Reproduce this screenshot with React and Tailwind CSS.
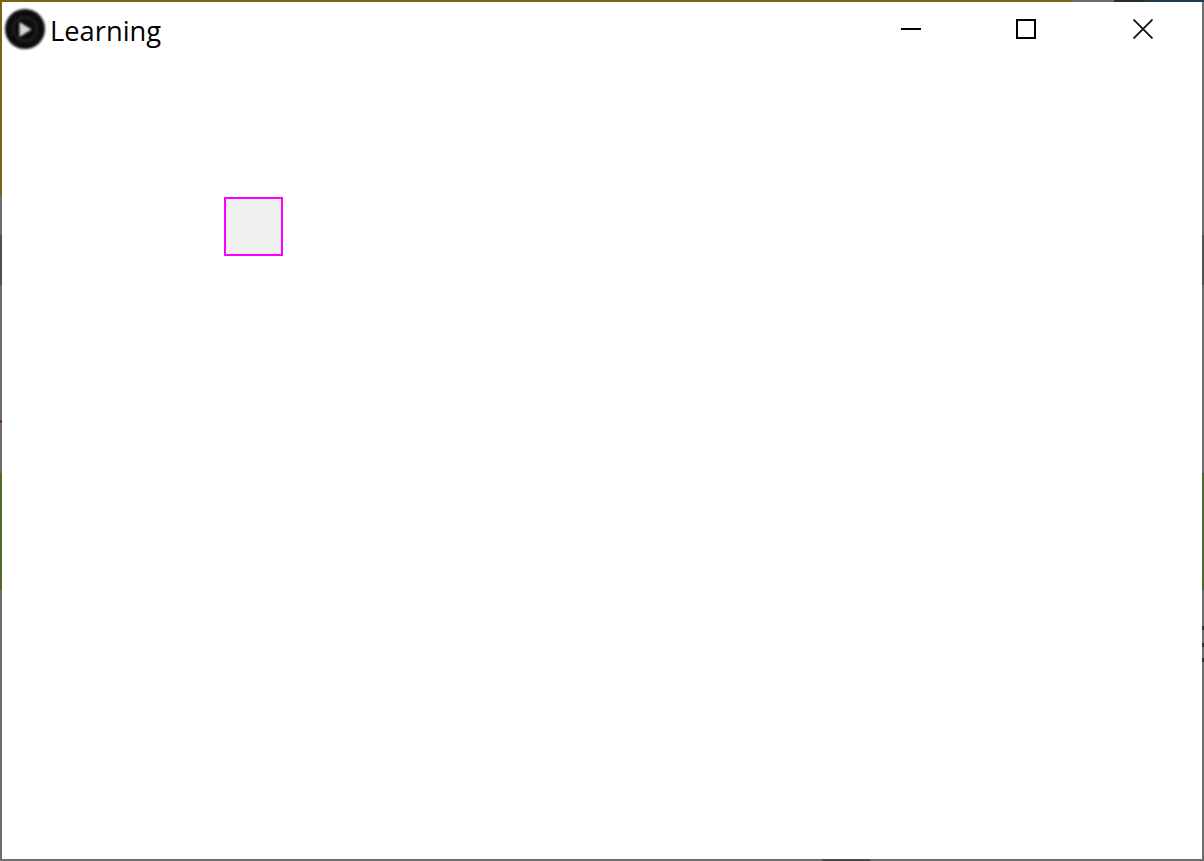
function WindowIcon() {
  return (
    <svg width="44" height="44" viewBox="0 0 44 44" className="shrink-0">
      <defs>
        <filter id="soft" x="-10%" y="-10%" width="120%" height="120%">
          <feGaussianBlur stdDeviation="0.9" />
        </filter>
        <filter id="softer" x="-30%" y="-30%" width="160%" height="160%">
          <feGaussianBlur stdDeviation="0.8" />
        </filter>
      </defs>
      <circle cx="22" cy="22" r="20" fill="#0b0b0b" filter="url(#soft)" />
      <circle cx="22" cy="22" r="12" fill="none" stroke="#1e1e1e" strokeWidth="3" filter="url(#soft)" />
      <path d="M16.5 15 L28.5 22.5 L16.5 30 Z" fill="#d6d6d6" filter="url(#softer)" />
    </svg>
  )
}

export default function App() {
  return (
    <div className="flex h-[861px] w-[1204px] flex-col overflow-hidden bg-white font-['Open_Sans','Noto_Sans',sans-serif]">
      <div className="flex h-[2px] shrink-0">
        <div className="w-[1071px] bg-[#7a6414]" />
        <div className="w-[43px] bg-[#6e6e6e]" />
        <div className="w-[30px] bg-[#2b2d30]" />
        <div className="flex-1 bg-[#1d3a48]" />
      </div>

      <div className="flex min-h-0 flex-1">
        <div className="flex w-[2px] shrink-0 flex-col">
          <div className="h-[193px] bg-[#7a6414]" />
          <div className="h-[40px] bg-[#6e6e6e]" />
          <div className="h-[50px] bg-[#505050]" />
          <div className="h-[135px] bg-[#6e6e6e]" />
          <div className="h-[3px] bg-[#8a1f4a]" />
          <div className="h-[50px] bg-[#6e6e6e]" />
          <div className="h-[117px] bg-[#4f6a2a]" />
          <div className="flex-1 bg-[#6e6e6e]" />
        </div>

        <div className="min-w-0 flex-1">
          <div className="flex h-[54px] items-center">
            <div className="ml-[1px] flex items-center gap-[3px]">
              <WindowIcon />
              <span className="mt-[4px] text-[27.3px] leading-none text-black">Learning</span>
            </div>
            <div className="ml-auto flex h-full">
              <div className="flex w-[115px] items-center pl-12">
                <div className="h-[2px] w-[20px] bg-black" />
              </div>
              <div className="flex w-[117px] items-center pl-12">
                <div className="h-[20px] w-[20px] border-2 border-black" />
              </div>
              <div className="flex w-[117px] items-center pl-12">
                <svg width="20" height="20" viewBox="0 0 20 20">
                  <path d="M0.5 0.5 L19.5 19.5 M19.5 0.5 L0.5 19.5" stroke="#111" strokeWidth="1.8" fill="none" />
                </svg>
              </div>
            </div>
          </div>

          <div className="ml-[222px] mt-[141px] h-[59px] w-[59px] border-2 border-[#ff00ff] bg-[#f0f0f0]" />
        </div>

        <div className="flex w-[2px] shrink-0 flex-col">
          <div className="h-[233px] bg-[#6e6e6e]" />
          <div className="h-[50px] bg-[#505050]" />
          <div className="h-[188px] bg-[#6e6e6e]" />
          <div className="h-[117px] bg-[#4f6a2a]" />
          <div className="h-[36px] bg-[#6e6e6e]" />
          <div className="h-[4px] bg-[#333333]" />
          <div className="h-[13px] bg-[#6e6e6e]" />
          <div className="h-[4px] bg-[#333333]" />
          <div className="h-[11px] bg-[#6e6e6e]" />
          <div className="h-[4px] bg-[#333333]" />
          <div className="flex-1 bg-[#6e6e6e]" />
        </div>
      </div>

      <div className="flex h-[2px] shrink-0">
        <div className="w-[822px] bg-[#6e6e6e]" />
        <div className="w-[48px] bg-[#4a4a4a]" />
        <div className="flex-1 bg-[#6e6e6e]" />
      </div>
    </div>
  )
}
